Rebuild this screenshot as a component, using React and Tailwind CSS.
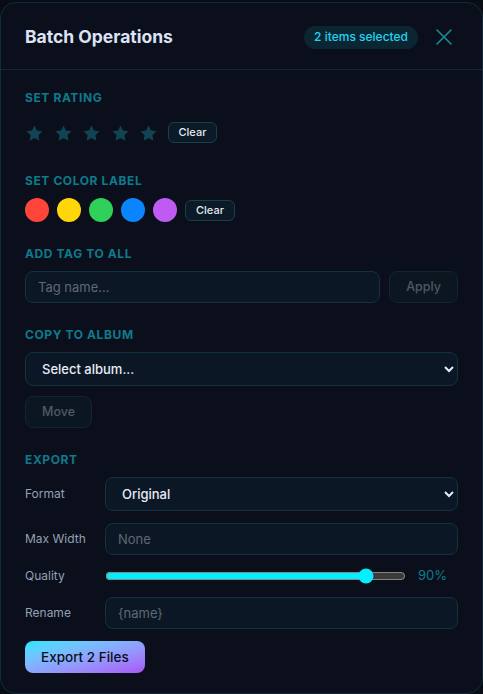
import React, { useState } from 'react';

const SWATCHES = ['#ff453a', '#ffd60a', '#30d158', '#0a84ff', '#bf5af2'];

function SectionLabel({ children }) {
  return (
    <div className="mb-[9px] text-xs leading-4 font-bold uppercase tracking-wider text-[#0e7a8c]">
      {children}
    </div>
  );
}

function Star() {
  return (
    <svg viewBox="0 0 24 24" className="w-[19px] h-[19px]" fill="#114452">
      <polygon points="12,2 15.09,8.26 22,9.27 17,14.14 18.18,21.02 12,17.77 5.82,21.02 7,14.14 2,9.27 8.91,8.26" />
    </svg>
  );
}

function SmallButton({ children }) {
  return (
    <button className="h-[21px] px-2.5 rounded-md border border-[#16404c] bg-[#0b1a26] text-[11px] font-medium text-[#e2e8f0]">
      {children}
    </button>
  );
}

const field =
  'h-8 px-3 rounded-lg border border-[#113340] bg-[#0b1724] text-[13px] text-[#e2e8f0] placeholder:text-[#5f6875] outline-none';
const picker =
  'h-[34px] px-3 rounded-lg border border-[#113340] bg-[#0b1724] text-[13px] font-medium text-[#e8ecf8] outline-none';
const ghostBtn =
  'h-8 px-4 rounded-lg border border-[#0f2631] bg-[#0b1620] text-[12.5px] font-medium text-[#4f5867]';

export default function App() {
  const [quality, setQuality] = useState(90);

  return (
    <div
      className="min-h-screen bg-[#080c15] pt-[2px] [color-scheme:dark]"
      style={{ fontFamily: 'Inter, "Noto Sans", sans-serif' }}
    >
      <div className="w-[483px] rounded-2xl border border-[#0f2c37] bg-[#0a0f1b]">
        {/* header */}
        <div className="h-[67px] px-6 pt-0.5 flex items-center justify-between border-b border-[#0f2a35]">
          <h2 className="text-[17.5px] font-bold text-[#dde3f5]">Batch Operations</h2>
          <div className="flex items-center gap-3">
            <span className="h-[23px] px-2.5 flex items-center rounded-full bg-[#0c2533] text-xs font-medium text-[#22d3ee]">
              2 items selected
            </span>
            <button className="p-1.5">
              <svg viewBox="0 0 16 16" className="w-4 h-4" stroke="#1a8a99" strokeWidth="1.6" strokeLinecap="round">
                <path d="M1 1L15 15M15 1L1 15" />
              </svg>
            </button>
          </div>
        </div>

        {/* body */}
        <div className="px-6 pt-5 pb-5 flex flex-col gap-6">
          <section>
            <SectionLabel>Set Rating</SectionLabel>
            <div className="h-[34px] flex items-center gap-[9.5px]">
              {[1, 2, 3, 4, 5].map(n => (
                <button key={n} className="pt-0.5"><Star /></button>
              ))}
              <SmallButton>Clear</SmallButton>
            </div>
          </section>

          <section>
            <SectionLabel>Set Color Label</SectionLabel>
            <div className="flex items-center gap-2">
              {SWATCHES.map(c => (
                <button key={c} className="w-6 h-6 rounded-full" style={{ background: c }} />
              ))}
              <SmallButton>Clear</SmallButton>
            </div>
          </section>

          <section>
            <SectionLabel>Add Tag to All</SectionLabel>
            <div className="flex gap-[9px]">
              <input placeholder="Tag name..." className={`flex-1 ${field}`} />
              <button className={ghostBtn}>Apply</button>
            </div>
          </section>

          <section>
            <SectionLabel>Copy to Album</SectionLabel>
            <select className={`w-full ${picker}`}>
              <option>Select album...</option>
            </select>
            <button className={`mt-2.5 ${ghostBtn}`}>Move</button>
          </section>

          <section>
            <SectionLabel>Export</SectionLabel>
            <div className="flex flex-col gap-[10px]">
              <div className="flex items-center">
                <label className="w-20 text-xs text-[#94a0b4]">Format</label>
                <select className={`flex-1 ${picker}`}>
                  <option>Original</option>
                </select>
              </div>
              <div className="flex items-center mt-0.5">
                <label className="w-20 text-xs text-[#94a0b4]">Max Width</label>
                <input placeholder="None" className={`flex-1 ${field}`} />
              </div>
              <div className="flex items-center h-[22px]">
                <label className="w-20 text-xs text-[#94a0b4]">Quality</label>
                <input
                  type="range"
                  min="10"
                  max="100"
                  value={quality}
                  onChange={e => setQuality(Number(e.target.value))}
                  className="flex-1 accent-[#00f0ff]"
                />
                <span className="w-10 ml-3 text-[13px] text-[#0e7a8c]">{quality}%</span>
              </div>
              <div className="flex items-center">
                <label className="w-20 text-xs text-[#94a0b4]">Rename</label>
                <input placeholder="{name}" className={`flex-1 ${field}`} />
              </div>
              <div className="mt-0.5">
                <button className="h-8 px-4 rounded-lg bg-gradient-to-br from-[#00e8ff] to-[#a855f7] text-[13.5px] font-medium text-[#0a0f1a]">
                  Export 2 Files
                </button>
              </div>
            </div>
          </section>
        </div>
      </div>
    </div>
  );
}
